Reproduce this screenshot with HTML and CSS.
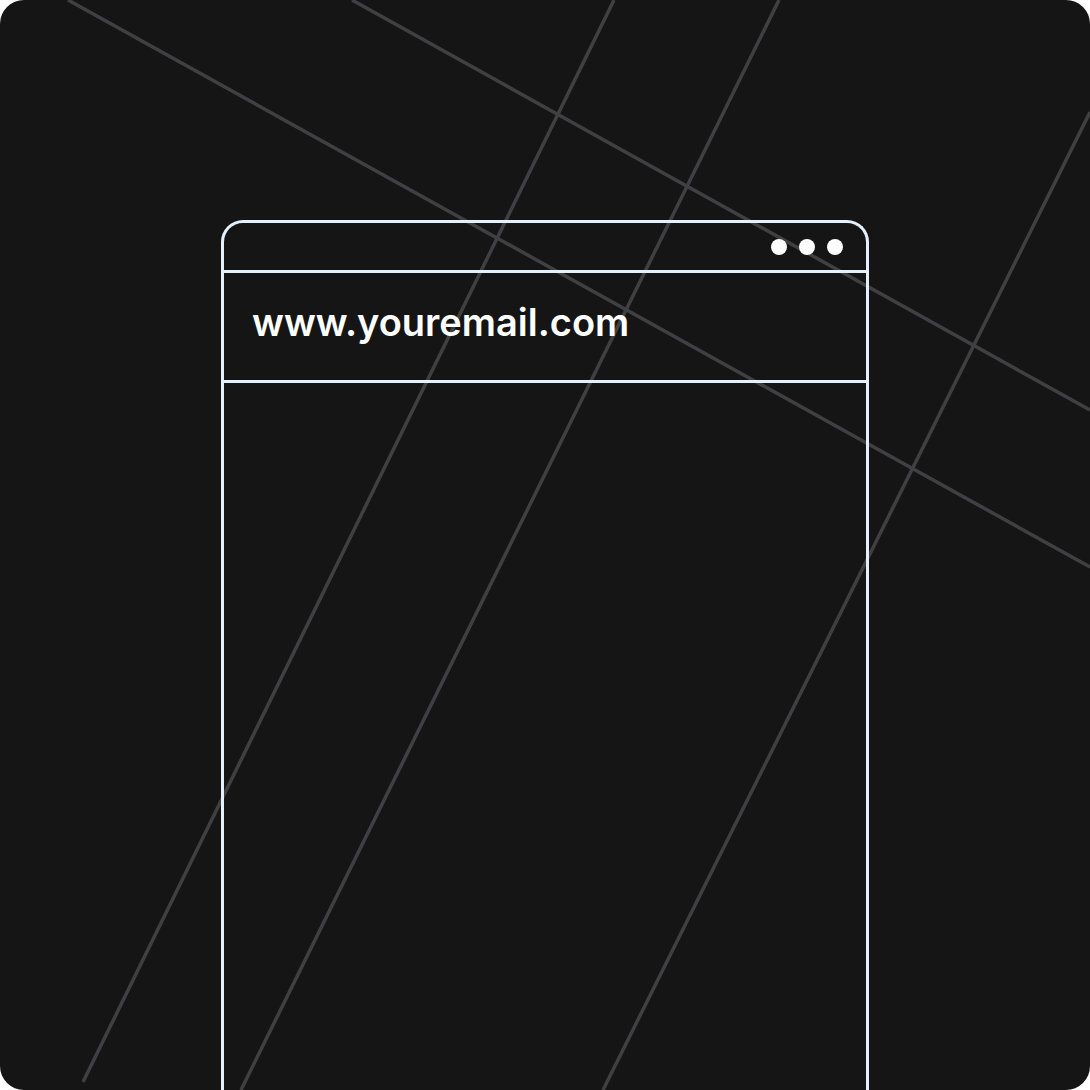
FILE: index.html
```html
<!DOCTYPE html>
<html>
<head>
<meta charset="utf-8">
<link rel="stylesheet" href="styles.css">
</head>
<body>
<div class="card">
  <svg class="lines" width="1090" height="1090" viewBox="0 0 1090 1090">
    <g stroke="#404042" stroke-width="3.5" fill="none">
      <line x1="68" y1="0" x2="1090" y2="567"/>
      <line x1="352" y1="0" x2="1090" y2="410"/>
      <line x1="614" y1="0" x2="83" y2="1082"/>
      <line x1="779" y1="0" x2="241" y2="1090"/>
      <line x1="1090" y1="112" x2="603" y2="1090"/>
    </g>
  </svg>
  <div class="window">
    <div class="titlebar">
      <span class="dot"></span><span class="dot"></span><span class="dot"></span>
    </div>
    <div class="address">www.youremail.com</div>
    <div class="content"></div>
  </div>
</div>
</body>
</html>
```
FILE: styles.css
```css
html, body {
  margin: 0;
  padding: 0;
  background: #ffffff;
}
.card {
  position: relative;
  width: 1090px;
  height: 1090px;
  background: #151515;
  border-radius: 24px;
  overflow: hidden;
  padding: 220px 0 0 221px;
  box-sizing: border-box;
}
.lines {
  position: absolute;
  left: 0;
  top: 0;
}
.window {
  position: relative;
  width: 648px;
  height: 900px;
  box-sizing: border-box;
  border: 3px solid #e4f0fb;
  border-bottom: none;
  border-radius: 22px 22px 0 0;
  display: flex;
  flex-direction: column;
}
.titlebar {
  height: 47px;
  border-bottom: 3px solid #e4f0fb;
  display: flex;
  align-items: center;
  justify-content: flex-end;
  gap: 12px;
  padding-right: 23px;
}
.dot {
  width: 16px;
  height: 16px;
  border-radius: 50%;
  background: #ffffff;
}
.address {
  height: 110px;
  border-bottom: 3px solid #e4f0fb;
  display: flex;
  align-items: center;
  padding-left: 28px;
  padding-bottom: 10px;
  box-sizing: border-box;
  font-family: Inter, "Noto Sans", sans-serif;
  font-weight: 600;
  font-size: 38px;
  line-height: 1;
  color: #ffffff;
}
.content {
  flex: 1;
}
```
